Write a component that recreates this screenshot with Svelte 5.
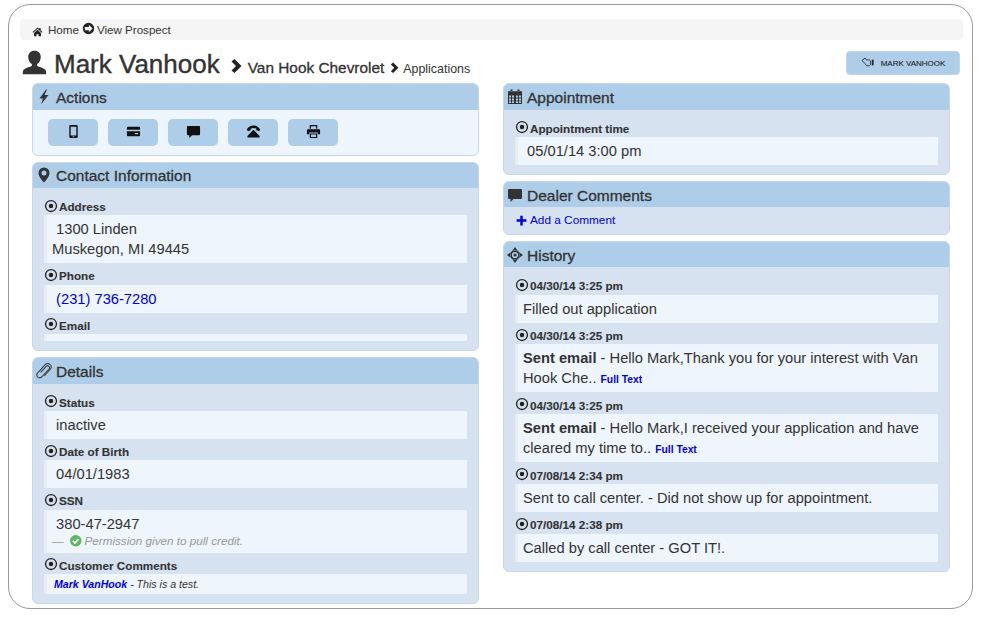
<script>
	const icons = {
		home: 'M8 2 .8 8.8l1 1L8 4l6.2 5.800 1-1-2.700-2.500V3h-2v1.500z M3 10.200 8 5.500l5 4.700V15H9.500v-3h-3v3H3z',
		go: 'M8 1a7 7 0 1 0 0 14A7 7 0 0 0 8 1z M8.500 3.500 13 8l-4.500 4.500V10h-5V6h5z',
		user: 'M8 .5c2.500 0 4 1.700 4 4 0 2.100-1 3.800-2.300 4.500v1c0 .6 4.200 1.200 5.300 2.700.5.7.5 2.800.5 2.800H.5s0-2.100.5-2.800C2.100 11.200 6.300 10.600 6.300 10V9C5 8.300 4 6.600 4 4.500 4 2.200 5.500.5 8 .5z',
		chevron: 'M2.500 4.500 5.500 2l7 7-7 7-3-2.500L7 9z',
		flash: 'M10 .5 3.500 9.500H7L5 15.500l7.500-9.500H8.500L11 .5z',
		calendar:
			'M3.500.5h2v2h-2z M10.500.5h2v2h-2z M1 2.200h14V15H1z M2 6.500h2v2H2z M5 6.500h2v2H5z M9 6.500h2v2H9z M12 6.500h2v2h-2z M2 9.500h2v2H2z M5 9.500h2v2H5z M9 9.500h2v2H9z M12 9.500h2v2h-2z M2 12.300h2v1.700H2z M5 12.300h2v1.700H5z M9 12.300h2v1.700H9z M12 12.300h2v1.700h-2z',
		mobile:
			'M5 1h6a1.500 1.500 0 0 1 1.500 1.500v11A1.500 1.500 0 0 1 11 15H5a1.500 1.500 0 0 1-1.500-1.500v-11A1.500 1.500 0 0 1 5 1z M5 2.800v9.400h6V2.800z M7.200 13h1.600v1H7.200z',
		card: 'M2 3h12a1 1 0 0 1 1 1v8a1 1 0 0 1-1 1H2a1 1 0 0 1-1-1V4a1 1 0 0 1 1-1z M1 6h14v1.600H1z M9.500 9.500v1.500H13V9.500z',
		comment: 'M2 2h12a1 1 0 0 1 1 1v8a1 1 0 0 1-1 1H6.500l-3 3v-3H2a1 1 0 0 1-1-1V3a1 1 0 0 1 1-1z',
		phone: 'M.8 5.600C3 2.600 5.500 1.500 8 1.500s5 1.100 7.200 4.100L14 7.600l-3-1V5C10 4.500 9 4.200 8 4.200S6 4.500 5 5v1.600l-3 1z M8 6l6.500 6.800v1.700h-13v-1.700z',
		print:
			'M4 1h8v4H4z M5.300 2.300V5h5.400V2.300z M2 5.500h12a1 1 0 0 1 1 1V11h-2.500V9h-9v2H1V6.500a1 1 0 0 1 1-1z M4 10h8v5H4z M5.300 11.200v2.600h5.400v-2.600z',
		marker: 'M8 .5A5.500 5.500 0 0 1 13.500 6c0 3.500-4 8-5.500 9.500C6.500 14 2.500 9.500 2.500 6A5.500 5.500 0 0 1 8 .5z M8 3.500a2.500 2.500 0 1 0 0 5 2.500 2.500 0 0 0 0-5z',
		record: 'M8 1a7 7 0 1 0 0 14A7 7 0 0 0 8 1z M8 2.500a5.500 5.500 0 1 1 0 11 5.500 5.500 0 0 1 0-11z M8 5.400a2.600 2.600 0 1 0 0 5.200 2.600 2.600 0 0 0 0-5.200z',
		plus: 'M6.500 2h3v4.500H14v3H9.500V14h-3V9.500H2v-3h4.500z',
		target:
			'M8 0l2.500 3.500h-5z M8 16l-2.500-3.500h5z M0 8l3.500-2.500v5z M16 8l-3.500 2.500v-5z M8 3a5 5 0 1 0 0 10A5 5 0 0 0 8 3z M8 4.900a3.100 3.100 0 1 1 0 6.200 3.100 3.100 0 0 1 0-6.200z M8 6.500a1.500 1.500 0 1 0 0 3 1.500 1.500 0 0 0 0-3z'
	};

	const actions = ['mobile', 'card', 'comment', 'phone', 'print'];

	const history = [
		{ when: '04/30/14 3:25 pm', text: 'Filled out application' },
		{
			when: '04/30/14 3:25 pm',
			lead: 'Sent email',
			text: ' - Hello Mark,Thank you for your interest with Van Hook Che.. ',
			more: true
		},
		{
			when: '04/30/14 3:25 pm',
			lead: 'Sent email',
			text: ' - Hello Mark,I received your application and have cleared my time to.. ',
			more: true
		},
		{ when: '07/08/14 2:34 pm', text: 'Sent to call center. - Did not show up for appointment.' },
		{ when: '07/08/14 2:38 pm', text: 'Called by call center - GOT IT!.' }
	];
</script>

{#snippet icon(name, cls)}
	<svg class={cls} viewBox="0 0 16 16" aria-hidden="true"><path fill-rule="evenodd" d={icons[name]} /></svg>
{/snippet}

{#snippet label(text)}
	<div class="label">{@render icon('record', 'rec')}{text}</div>
{/snippet}

<div class="frame">
	<div class="crumbs">
		{@render icon('home', 'crumb-home')}
		<a href="#home">Home</a>
		{@render icon('go', 'crumb-go')}
		<a href="#prospect">View Prospect</a>
	</div>

	<div class="head">
		<h1>
			{@render icon('user', 'user')}
			<span class="name">Mark Vanhook</span>
			{@render icon('chevron', 'chev')}
			<span class="dealer">Van Hook Chevrolet</span>
			{@render icon('chevron', 'chev small')}
			<span class="crumb-end">Applications</span>
		</h1>
		<button class="who">
			<svg class="hand" viewBox="0 0 16 12" aria-hidden="true">
				<path d="M.8 4.200 4.500 1.200l1.500 2.300h3.500l1.500 1.200v4.500L9.500 10.500H6.500L4 7.500z" />
				<rect x="12.500" y="3.200" width="2.200" height="6.800" />
			</svg>
			MARK VANHOOK
		</button>
	</div>

	<div class="cols">
		<div class="col tight">
			<section class="panel">
				<h2>{@render icon('flash', 'title-ico')}Actions</h2>
				<div class="actions">
					{#each actions as a}
						<button class="action" aria-label={a}>{@render icon(a, 'action-ico')}</button>
					{/each}
				</div>
			</section>

			<section class="panel">
				<h2>{@render icon('marker', 'title-ico')}Contact Information</h2>
				<div class="body">
					{@render label('Address')}
					<div class="value">&nbsp;1300 Linden<br />Muskegon, MI 49445</div>
					{@render label('Phone')}
					<div class="value">&nbsp;<a href="#phone">(231) 736-7280</a></div>
					{@render label('Email')}
					<div class="value empty"></div>
				</div>
			</section>

			<section class="panel">
				<h2>
					<svg class="title-ico clip" viewBox="0 0 16 16" aria-hidden="true">
						<path d="M4.600 9.400 10.200 3.400a1.900 1.900 0 0 1 2.800 2.600l-7.400 8a2.800 2.800 0 0 1-4.100-3.800L9 1.900A3.400 3.400 0 0 1 14.400 6.200L8.200 13" />
					</svg>
					Details
				</h2>
				<div class="body">
					{@render label('Status')}
					<div class="value">&nbsp;inactive</div>
					{@render label('Date of Birth')}
					<div class="value">&nbsp;04/01/1983</div>
					{@render label('SSN')}
					<div class="value ssn">
						&nbsp;380-47-2947
						<div class="perm">
							<span class="dash">—</span>
							<svg class="ok" viewBox="0 0 16 16" aria-hidden="true">
								<circle cx="8" cy="8" r="8" />
								<path d="M4.200 8.200 7 11l4.800-5.200" />
							</svg>
							<em>Permission given to pull credit.</em>
						</div>
					</div>
					{@render label('Customer Comments')}
					<div class="value note"><a href="#author">Mark VanHook</a> - This is a test.</div>
				</div>
			</section>
		</div>

		<div class="col">
			<section class="panel">
				<h2>{@render icon('calendar', 'title-ico')}Appointment</h2>
				<div class="body">
					{@render label('Appointment time')}
					<div class="value">&nbsp;05/01/14 3:00 pm</div>
				</div>
			</section>

			<section class="panel">
				<h2>{@render icon('comment', 'title-ico')}Dealer Comments</h2>
				<div class="add">
					<a href="#comment">{@render icon('plus', 'plus')}Add a Comment</a>
				</div>
			</section>

			<section class="panel">
				<h2>{@render icon('target', 'title-ico')}History</h2>
				<div class="body">
					{#each history as h}
						{@render label(h.when)}
						<div class="value">
							{#if h.lead}<b>{h.lead}</b>{/if}{h.text}{#if h.more}<a class="more" href="#full">Full Text</a>{/if}
						</div>
					{/each}
				</div>
			</section>
		</div>
	</div>
</div>

<style>
	:global(body) {
		background: #fff;
		font-family: 'Liberation Sans', Arial, sans-serif;
		color: #333;
	}
	svg {
		fill: currentColor;
		flex: none;
	}
	a {
		color: #0000dd;
		text-decoration: none;
	}
	.frame {
		box-sizing: border-box;
		width: 965px;
		height: 605px;
		margin: 4px 0 0 8px;
		padding: 14px 9px 0 11px;
		border: 1px solid #999;
		border-radius: 22px;
	}
	.crumbs {
		display: flex;
		align-items: center;
		height: 21px;
		padding-left: 12px;
		background: #f5f5f5;
		border-radius: 4px;
		font-size: 11.6px;
	}
	.crumbs a {
		color: #333;
	}
	.crumb-home {
		width: 11px;
		height: 11px;
		margin: 3px 5px 0 0;
		color: #222;
	}
	.crumb-go {
		width: 13px;
		height: 13px;
		margin: -2px 2px 0 3px;
		color: #222;
	}
	.head {
		display: flex;
		justify-content: space-between;
		align-items: flex-start;
		height: 43px;
		padding-right: 3px;
	}
	h1 {
		display: flex;
		align-items: baseline;
		margin: 11px 0 0 1px;
		font-weight: normal;
	}
	.user {
		align-self: flex-start;
		width: 27px;
		height: 25px;
		margin: -1px 6px 0 0;
		color: #333;
	}
	.name {
		font-size: 26px;
		line-height: 26px;
		-webkit-text-stroke: 0.4px #333;
	}
	.chev {
		width: 16px;
		height: 16px;
		margin: 0 2.5px 0 9.5px;
		color: #222;
	}
	.chev.small {
		width: 12px;
		height: 12px;
		margin: 0 2px 0 5px;
	}
	.dealer {
		font-size: 15.4px;
		-webkit-text-stroke: 0.3px #333;
	}
	.crumb-end {
		font-size: 12.4px;
	}
	.who {
		display: flex;
		align-items: center;
		justify-content: center;
		gap: 6px;
		width: 114px;
		height: 24px;
		margin-top: 11px;
		padding: 0;
		border: 1px solid #bcd6ee;
		border-radius: 4px;
		background: #aecde9;
		color: #222;
		font: 8px 'Liberation Sans', Arial, sans-serif;
		-webkit-text-stroke: 0.1px #222;
	}
	.hand {
		width: 14px;
		height: 10px;
		margin-top: -3px;
		fill: none;
		stroke: #222;
		stroke-width: 1;
	}
	.hand rect {
		fill: #222;
		stroke: none;
	}
	.cols {
		display: grid;
		grid-template-columns: 447px 447px;
		gap: 24px;
		margin-left: 12px;
	}
	.col {
		display: flex;
		flex-direction: column;
		gap: 6px;
	}
	.panel {
		border: 1px solid #c3d8ee;
		border-radius: 6px;
		background: #d6e2ef;
		overflow: hidden;
	}
	h2 {
		display: flex;
		align-items: center;
		box-sizing: border-box;
		height: 25.5px;
		margin: 0;
		padding: 2px 0 0 3px;
		background: #aecde9;
		font-size: 15.5px;
		font-weight: normal;
		color: #333;
		-webkit-text-stroke: 0.3px #333;
	}
	.title-ico {
		width: 16px;
		height: 16px;
		margin: -2px 4px 0 0;
	}
	.clip {
		fill: none;
		stroke: #444;
		stroke-width: 1.1;
		-webkit-text-stroke: 0;
	}
	.actions {
		display: flex;
		gap: 10px;
		padding: 9px 15px;
		background: #eef5fc;
	}
	.action {
		display: flex;
		align-items: center;
		justify-content: center;
		width: 50px;
		height: 27px;
		padding: 0;
		border: 0;
		border-radius: 5px;
		background: #aecde9;
		color: #111;
	}
	.action-ico {
		width: 15px;
		height: 15px;
		margin-top: -2px;
	}
	.body {
		padding: 10px 11px 9px;
	}
	.label {
		display: flex;
		align-items: center;
		gap: 1px;
		height: 17.25px;
		font-size: 11.7px;
		font-weight: bold;
		-webkit-text-stroke: 0.1px #333;
	}
	.rec {
		width: 14px;
		height: 14px;
		margin-top: -2px;
		color: #222;
	}
	.value {
		min-height: 8px;
		margin-bottom: 4.5px;
		padding: 4px 8px 4px 5px;
		border-left: 3px solid #e8edf1;
		background: #eef5fc;
		font-size: 14.7px;
		line-height: 20px;
	}
	.tight .value {
		margin-bottom: 4px;
	}
	.value:last-child {
		margin-bottom: 0;
	}
	.value.empty {
		padding: 0;
		min-height: 7.5px;
	}
	.perm {
		display: flex;
		align-items: center;
		height: 15px;
		color: #999;
		font-size: 11.7px;
		line-height: 14px;
	}
	.dash {
		width: 18px;
	}
	.ok {
		width: 11.5px;
		height: 11.5px;
		margin-right: 3px;
		fill: #5cb85c;
	}
	.ok path {
		fill: none;
		stroke: #fff;
		stroke-width: 2.6;
	}
	.note {
		padding: 2px 8px 2px 7px;
		font-size: 10.6px;
		line-height: 16px;
		font-style: italic;
	}
	.note a {
		font-weight: bold;
	}
	.more {
		font-size: 10.3px;
		line-height: 1;
		font-weight: bold;
	}
	.add {
		box-sizing: border-box;
		height: 26.5px;
		padding: 5px 11px 0;
		font-size: 11.8px;
		line-height: 16px;
	}
	.add a {
		display: flex;
		align-items: center;
	}
	.plus {
		width: 13px;
		height: 13px;
		margin-right: 2px;
	}
</style>
